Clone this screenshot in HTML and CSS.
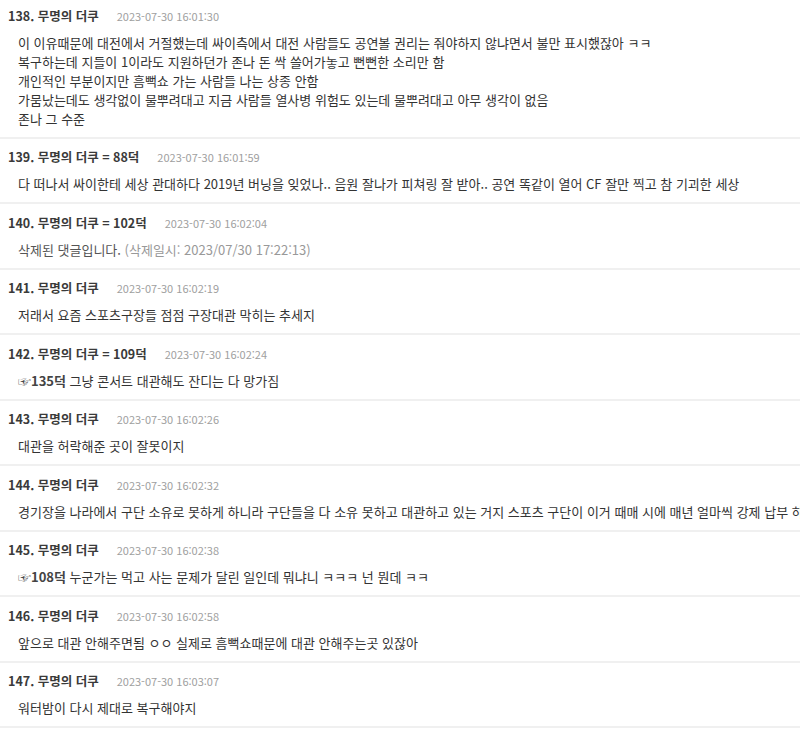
FILE: index.html
```html
<!DOCTYPE html>
<html lang="ko">
<head>
  <meta charset="UTF-8">
  <meta name="viewport" content="width=device-width, initial-scale=1.0">
  <title>댓글</title>
  <link rel="stylesheet" href="styles.css">
</head>
<body>
  <ul class="comment-list">
    <li class="comment">
      <div class="comment-header">
        <span class="comment-name">138. 무명의 더쿠</span>
        <span class="comment-date">2023-07-30 16:01:30</span>
      </div>
      <div class="comment-body">
        <p>이 이유때문에 대전에서 거절했는데 싸이측에서 대전 사람들도 공연볼 권리는 줘야하지 않냐면서 불만 표시했잖아 ㅋㅋ</p>
        <p>복구하는데 지들이 1이라도 지원하던가 존나 돈 싹 쓸어가놓고 뻔뻔한 소리만 함</p>
        <p>개인적인 부분이지만 흠뻑쇼 가는 사람들 나는 상종 안함</p>
        <p>가뭄났는데도 생각없이 물뿌려대고 지금 사람들 열사병 위험도 있는데 물뿌려대고 아무 생각이 없음</p>
        <p>존나 그 수준</p>
      </div>
    </li>
    <li class="comment">
      <div class="comment-header">
        <span class="comment-name">139. 무명의 더쿠 = 88덕</span>
        <span class="comment-date">2023-07-30 16:01:59</span>
      </div>
      <div class="comment-body">
        <p>다 떠나서 싸이한테 세상 관대하다 2019년 버닝을 잊었나.. 음원 잘나가 피쳐링 잘 받아.. 공연 똑같이 열어 CF 잘만 찍고 참 기괴한 세상</p>
      </div>
    </li>
    <li class="comment">
      <div class="comment-header">
        <span class="comment-name">140. 무명의 더쿠 = 102덕</span>
        <span class="comment-date">2023-07-30 16:02:04</span>
      </div>
      <div class="comment-body deleted">
        <p>삭제된 댓글입니다. <span class="deleted-at">(삭제일시: 2023/07/30 17:22:13)</span></p>
      </div>
    </li>
    <li class="comment">
      <div class="comment-header">
        <span class="comment-name">141. 무명의 더쿠</span>
        <span class="comment-date">2023-07-30 16:02:19</span>
      </div>
      <div class="comment-body">
        <p>저래서 요즘 스포츠구장들 점점 구장대관 막히는 추세지</p>
      </div>
    </li>
    <li class="comment">
      <div class="comment-header">
        <span class="comment-name">142. 무명의 더쿠 = 109덕</span>
        <span class="comment-date">2023-07-30 16:02:24</span>
      </div>
      <div class="comment-body">
        <p><span class="reply-to">☞135덕</span> 그냥 콘서트 대관해도 잔디는 다 망가짐</p>
      </div>
    </li>
    <li class="comment">
      <div class="comment-header">
        <span class="comment-name">143. 무명의 더쿠</span>
        <span class="comment-date">2023-07-30 16:02:26</span>
      </div>
      <div class="comment-body">
        <p>대관을 허락해준 곳이 잘못이지</p>
      </div>
    </li>
    <li class="comment">
      <div class="comment-header">
        <span class="comment-name">144. 무명의 더쿠</span>
        <span class="comment-date">2023-07-30 16:02:32</span>
      </div>
      <div class="comment-body">
        <p>경기장을 나라에서 구단 소유로 못하게 하니라 구단들을 다 소유 못하고 대관하고 있는 거지 스포츠 구단이 이거 때매 시에 매년 얼마씩 강제 납부 하는데</p>
      </div>
    </li>
    <li class="comment">
      <div class="comment-header">
        <span class="comment-name">145. 무명의 더쿠</span>
        <span class="comment-date">2023-07-30 16:02:38</span>
      </div>
      <div class="comment-body">
        <p><span class="reply-to">☞108덕</span> 누군가는 먹고 사는 문제가 달린 일인데 뭐냐니 ㅋㅋㅋ 넌 뭔데 ㅋㅋ</p>
      </div>
    </li>
    <li class="comment">
      <div class="comment-header">
        <span class="comment-name">146. 무명의 더쿠</span>
        <span class="comment-date">2023-07-30 16:02:58</span>
      </div>
      <div class="comment-body">
        <p>앞으로 대관 안해주면됨 ㅇㅇ 실제로 흠뻑쇼때문에 대관 안해주는곳 있잖아</p>
      </div>
    </li>
    <li class="comment">
      <div class="comment-header">
        <span class="comment-name">147. 무명의 더쿠</span>
        <span class="comment-date">2023-07-30 16:03:07</span>
      </div>
      <div class="comment-body">
        <p>워터밤이 다시 제대로 복구해야지</p>
      </div>
    </li>
  </ul>
</body>
</html>
```

FILE: styles.css
```css
/* page */
html, body {
  overflow: hidden;
}

body {
  margin: 0;
  font-family: "Noto Sans CJK KR", "Noto Sans", sans-serif;
  font-size: 12px;
  color: #333;
  background-color: #fff;
}

/* comment list */
.comment-list {
  margin: -3px 0 0;
  padding: 0;
  list-style-type: none;
}

.comment {
  padding: 8.5px 0 9px 8px;
  border-bottom: 2px solid #f0f0f0;
}

.comment-header {
  display: flex;
  align-items: center;
  gap: 18px;
  height: 20px;
  line-height: 20px;
  white-space: nowrap;
}

.comment-name {
  font-size: 12.5px;
  font-weight: 700;
  color: #3a3a3a;
}

.comment-date {
  font-size: 11px;
  color: #a0a0a0;
}

.comment-body {
  margin: 7px 0 0 10px;
  font-size: 13px;
  line-height: 19px;
  white-space: nowrap;
}

.comment-body p {
  margin: 0;
}

.reply-to {
  font-weight: 700;
  color: #444;
}

.comment-body.deleted {
  color: #555;
}

.deleted-at {
  color: #999;
}
```
